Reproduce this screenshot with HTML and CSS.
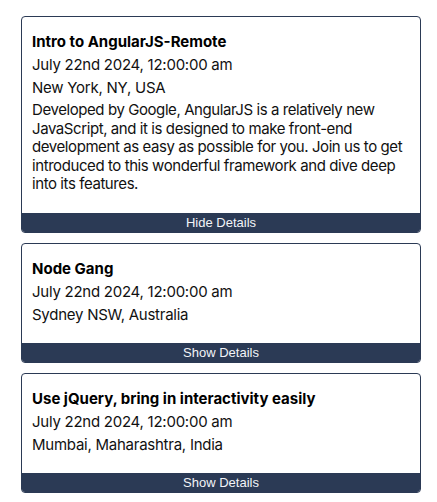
FILE: index.html
```html
<!DOCTYPE html>
<html>
<head>
<meta charset="utf-8">
<link rel="stylesheet" href="styles.css">
</head>
<body>
<div class="list">
  <div class="card">
    <div class="body">
      <h3 class="title">Intro to AngularJS-Remote</h3>
      <p class="meta">July 22nd 2024, 12:00:00 am</p>
      <p class="meta">New York, NY, USA</p>
      <p class="desc">Developed by Google, AngularJS is a relatively new JavaScript, and it is designed to make front-end development as easy as possible for you. Join us to get introduced to this wonderful framework and dive deep into its features.</p>
    </div>
    <button class="toggle">Hide Details</button>
  </div>
  <div class="card">
    <div class="body">
      <h3 class="title">Node Gang</h3>
      <p class="meta">July 22nd 2024, 12:00:00 am</p>
      <p class="meta">Sydney NSW, Australia</p>
    </div>
    <button class="toggle">Show Details</button>
  </div>
  <div class="card">
    <div class="body">
      <h3 class="title">Use jQuery, bring in interactivity easily</h3>
      <p class="meta">July 22nd 2024, 12:00:00 am</p>
      <p class="meta">Mumbai, Maharashtra, India</p>
    </div>
    <button class="toggle">Show Details</button>
  </div>
</div>
</body>
</html>
```
FILE: styles.css
```css
html, body {
  margin: 0;
  padding: 0;
  background: #ffffff;
}
body {
  font-family: Inter, "Noto Sans", sans-serif;
  color: #111111;
}
.list {
  display: flex;
  flex-direction: column;
  gap: 10px;
  width: 400px;
  margin: 16px 0 0 21px;
}
.card {
  border: 1px solid #2b3a55;
  border-radius: 4px;
  overflow: hidden;
  display: flex;
  flex-direction: column;
  background: #fff;
}
.body {
  padding: 16px 9px 19px 10px;
}
.title {
  margin: 0;
  font-size: 15px;
  line-height: 18px;
  font-weight: 700;
  color: #000;
}
.meta {
  margin: 5px 0 0 0;
  font-size: 15px;
  line-height: 18px;
  font-weight: 400;
  letter-spacing: -0.25px;
}
.desc {
  margin: 4px 0 0 0;
  font-size: 15px;
  line-height: 18.6px;
  letter-spacing: -0.42px;
}
.toggle {
  display: block;
  width: 100%;
  height: 19px;
  border: none;
  margin: 0;
  padding: 0;
  background: #2b3a55;
  color: #f2f4f8;
  font-family: "Liberation Sans", Arial, sans-serif;
  font-size: 13px;
  line-height: 19px;
  text-align: center;
}
```
